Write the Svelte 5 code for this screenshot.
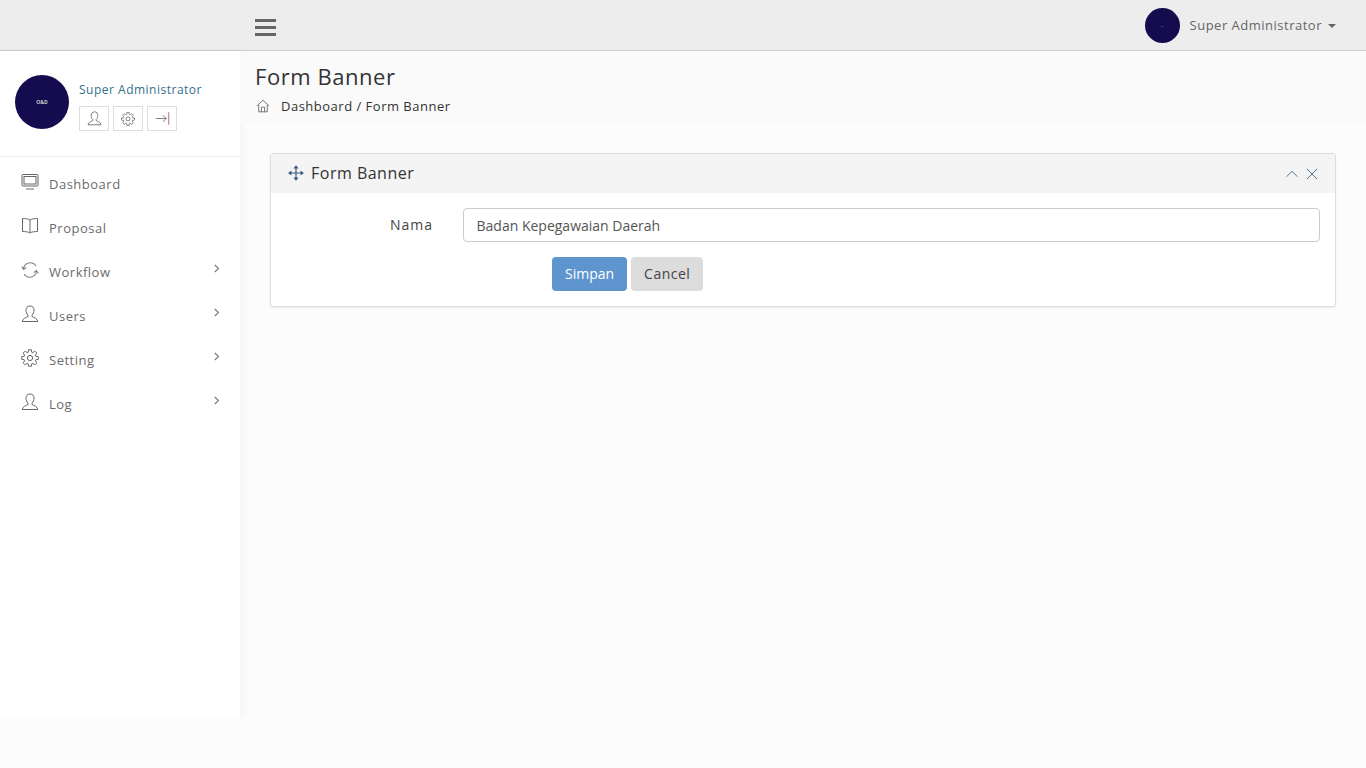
<script>
	const menu = [
		{ label: 'Dashboard', icon: 'monitor', sub: false },
		{ label: 'Proposal', icon: 'book', sub: false },
		{ label: 'Workflow', icon: 'sync', sub: true },
		{ label: 'Users', icon: 'user', sub: true },
		{ label: 'Setting', icon: 'gear', sub: true },
		{ label: 'Log', icon: 'user', sub: true }
	];

	let nama = $state('Badan Kepegawaian Daerah');

	// eight toothed outline for the setting icon
	function gearPath() {
		const pts = [];
		for (let i = 0; i < 8; i++) {
			const a = (i * Math.PI) / 4 - Math.PI / 2;
			for (const [off, r] of [[-0.3, 6], [-0.17, 8.4], [0.17, 8.4], [0.3, 6]]) {
				pts.push(`${(9 + r * Math.cos(a + off)).toFixed(2)} ${(9 + r * Math.sin(a + off)).toFixed(2)}`);
			}
		}
		return 'M' + pts.join('L') + 'Z';
	}
</script>

{#snippet icon(name, size)}
	<svg class="ico" width={size} height={size} viewBox="0 0 18 18" fill="none" stroke="currentColor" stroke-width="1">
		{#if name === 'monitor'}
			<rect x="1" y="1.5" width="16" height="11.5" rx="1" />
			<rect x="3" y="3.5" width="12" height="7.5" />
			<path d="M5 16h8" />
		{:else if name === 'book'}
			<path d="M9 3C7.500 1.800 4 1.500 1.500 1.500v13c2.500 0 6 .3 7.500 1.500 1.500-1.200 5-1.500 7.500-1.500v-13C14 1.500 10.500 1.800 9 3zM9 3v13" />
		{:else if name === 'sync'}
			<path class="soft" d="M2.500 8A6.800 6.800 0 0 1 15 5" stroke-width="1.100" />
			<path class="soft" d="M15.500 10A6.800 6.800 0 0 1 3 13" stroke-width="1.100" />
			<path class="soft" d="M.8 5.500 2.500 8.500 5.200 6.500M17.200 12.500 15.500 9.500 12.800 11.500" stroke-width="1.100" />
		{:else if name === 'user'}
			<path d="M9 1c-2.600 0-4 1.900-4 4.200 0 2.100.8 3.700 2 4.800v1.500c-1.500 1-5.300 1.600-5.800 5h15.600c-.5-3.400-4.300-4-5.800-5V10c1.200-1.100 2-2.700 2-4.800C13 2.900 11.600 1 9 1z" />
		{:else if name === 'gear'}
			<circle cx="9" cy="9" r="2.600" />
			<path d={gearPath()} />
		{:else if name === 'logout'}
			<path d="M1 9h12.500M9.500 5l4 4-4 4" />
			<path class="bar" d="M16.500 1.500v15" />
		{:else if name === 'home'}
			<path d="M1 9 9 1.500 17 9M3.500 7.500V16.500h11V7.500M7 16.500V10.500h4v6" />
		{:else if name === 'move'}
			<path d="M9 1v16M1 9h16" stroke-width="1.300" />
			<path d="M9 .2 6.200 3.800h5.600zM9 17.800l-2.800-3.600h5.600zM.2 9l3.600-2.800v5.600zM17.800 9l-3.600-2.800v5.600z" fill="currentColor" stroke="none" />
		{:else if name === 'up'}
			<path d="M2 12.500 9 5.500l7 7" stroke-width="1.200" />
		{:else if name === 'close'}
			<path d="M2.500 2.500l13 13M15.500 2.500l-13 13" stroke-width="1.200" />
		{:else if name === 'right'}
			<path d="M5.500 2 13 9l-7.500 7" stroke-width="2.200" />
		{/if}
	</svg>
{/snippet}

<div class="topbar">
	<button class="burger" aria-label="Menu"><span></span><span></span><span></span></button>
	<div class="account">
		<div class="avatar small"><span>…</span></div>
		<span class="account-name">Super Administrator</span>
		<span class="caret"></span>
	</div>
</div>

<div class="shell">
	<aside class="sidebar">
		<div class="profile">
			<div class="avatar large"><span>O&amp;D</span></div>
			<div class="profile-info">
				<div class="profile-name">Super Administrator</div>
				<div class="profile-actions">
					<button>{@render icon('user', 15)}</button>
					<button>{@render icon('gear', 14)}</button>
					<button>{@render icon('logout', 15)}</button>
				</div>
			</div>
		</div>
		<nav class="menu">
			{#each menu as item}
				<div class="menu-item">
					<span class="menu-icon">{@render icon(item.icon, 18)}</span>
					<span class="menu-label">{item.label}</span>
					{#if item.sub}
						<span class="menu-arrow">{@render icon('right', 9)}</span>
					{/if}
				</div>
			{/each}
		</nav>
	</aside>

	<main class="content">
		<header class="page-head">
			<h1>Form Banner</h1>
			<div class="crumbs">
				<span class="crumb-home">{@render icon('home', 14)}</span>
				<span>Dashboard / Form Banner</span>
			</div>
		</header>

		<div class="body">
			<section class="card">
				<div class="card-head">
					<span class="move">{@render icon('move', 16)}</span>
					<h2>Form Banner</h2>
					<div class="card-tools">
						<span>{@render icon('up', 14)}</span>
						<span>{@render icon('close', 14)}</span>
					</div>
				</div>
				<form class="card-body" onsubmit={(e) => e.preventDefault()}>
					<div class="row">
						<label for="nama">Nama</label>
						<input id="nama" type="text" bind:value={nama} />
					</div>
					<div class="buttons">
						<button class="btn primary" type="submit">Simpan</button>
						<button class="btn cancel" type="button">Cancel</button>
					</div>
				</form>
			</section>
		</div>
	</main>
</div>

<style>
	:global(body) {
		background: #fcfcfc;
		font-family: 'Open Sans', sans-serif;
		font-size: 13px;
		color: #333;
	}

	button {
		font-family: inherit;
	}

	.ico {
		display: block;
	}

	.soft {
		opacity: 0.8;
	}

	.topbar {
		height: 50px;
		background: #ededed;
		border-bottom: 1px solid #ccc;
		display: flex;
		align-items: center;
		justify-content: space-between;
		padding: 0 30px 0 255px;
	}

	.burger {
		width: 21px;
		padding: 0;
		border: 0;
		background: none;
		display: flex;
		flex-direction: column;
		gap: 4px;
		margin-top: 4px;
	}

	.burger span {
		height: 3px;
		background: #666;
	}

	.account {
		display: flex;
		align-items: center;
	}

	.avatar {
		border-radius: 50%;
		background: #150c4f;
		color: #ccc;
		display: flex;
		align-items: center;
		justify-content: center;
		flex: none;
	}

	.avatar.small {
		width: 35px;
		height: 35px;
		font-size: 4px;
	}

	.avatar.large {
		width: 54px;
		height: 54px;
		font-size: 5px;
		font-weight: 700;
	}

	.account-name {
		margin-left: 10px;
		color: #666;
		font-size: 13px;
		letter-spacing: 0.5px;
	}

	.caret {
		margin-left: 6px;
		margin-top: 2px;
		border-top: 4px solid #666;
		border-left: 4px solid transparent;
		border-right: 4px solid transparent;
	}

	.shell {
		display: flex;
		align-items: flex-start;
	}

	.sidebar {
		width: 240px;
		height: 667px;
		background: #fff;
		flex: none;
		box-shadow: 0 3px 12px rgba(0, 0, 0, 0.05);
	}

	.profile {
		height: 106px;
		box-sizing: border-box;
		border-bottom: 1px solid #eee;
		display: flex;
		padding: 24px 15px 0;
	}

	.profile-info {
		margin-left: 10px;
	}

	.profile-name {
		color: #33708a;
		font-size: 12px;
		letter-spacing: 0.5px;
		line-height: 16px;
		margin-top: 7px;
	}

	.profile-actions {
		display: flex;
		gap: 4px;
		margin-top: 8px;
	}

	.profile-actions button {
		width: 30px;
		height: 25px;
		padding: 0;
		background: #fff;
		border: 1px solid #ddd;
		color: #666;
		display: flex;
		align-items: center;
		justify-content: center;
	}

	.bar {
		color: #a55;
	}

	.menu {
		padding-top: 5px;
	}

	.menu-item {
		height: 44px;
		display: flex;
		align-items: center;
		padding: 0 19px 0 21px;
		color: #6b6b6b;
		font-size: 13px;
		letter-spacing: 0.5px;
	}

	.menu-icon {
		width: 28px;
		color: #666;
		margin-top: -5px;
	}

	.menu-label {
		flex: 1;
	}

	.menu-arrow {
		color: #777;
		margin-top: -8px;
	}

	.content {
		flex: 1;
		min-width: 0;
	}

	.page-head {
		height: 74px;
		box-sizing: border-box;
		background: #fafafa;
		padding: 11px 15px 0;
	}

	h1 {
		margin: 0;
		font-size: 22px;
		font-weight: 400;
		line-height: 28px;
		color: #333;
		letter-spacing: 0.55px;
	}

	.crumbs {
		display: flex;
		align-items: center;
		margin-top: 7px;
		font-size: 13px;
		letter-spacing: 0.5px;
		color: #333;
	}

	.crumb-home {
		width: 26px;
		padding-left: 1px;
		box-sizing: border-box;
		color: #555;
	}

	.body {
		padding: 28px 30px 0;
	}

	.card {
		background: #fff;
		border: 1px solid #ddd;
		border-radius: 3px;
		box-shadow: 0 1px 2px rgba(0, 0, 0, 0.08);
	}

	.card-head {
		height: 39px;
		background: #f4f4f4;
		display: flex;
		align-items: center;
		padding: 0 16px 0 17px;
	}

	.move {
		color: #3b5578;
		margin-right: 7px;
		margin-top: -2px;
	}

	h2 {
		margin: 0 0 2px;
		font-size: 16px;
		font-weight: 400;
		letter-spacing: 0.5px;
		color: #333;
		flex: 1;
	}

	.card-tools {
		display: flex;
		gap: 6px;
		color: #4a6a8a;
	}

	.card-body {
		padding: 15px 15px 15px 0;
	}

	.row {
		display: flex;
		align-items: center;
	}

	label {
		width: 162px;
		padding: 0 30px 2px 0;
		box-sizing: content-box;
		text-align: right;
		font-size: 14px;
		letter-spacing: 1px;
		color: #444;
	}

	input {
		flex: 1;
		min-width: 0;
		height: 34px;
		box-sizing: border-box;
		border: 1px solid #ccc;
		border-radius: 4px;
		padding: 0 12px 0 12.5px;
		font: inherit;
		font-size: 14px;
		color: #555;
	}

	.buttons {
		display: flex;
		gap: 4px;
		margin: 15px 0 0 281px;
	}

	.btn {
		height: 34px;
		padding: 0 13px 2px;
		border: 0;
		border-radius: 4px;
		background: #dcdcdc;
		color: #444;
		font-size: 14px;
	}

	.btn.cancel {
		letter-spacing: 0.5px;
	}

	.btn.primary {
		background: #5f95cf;
		color: #fff;
	}
</style>
